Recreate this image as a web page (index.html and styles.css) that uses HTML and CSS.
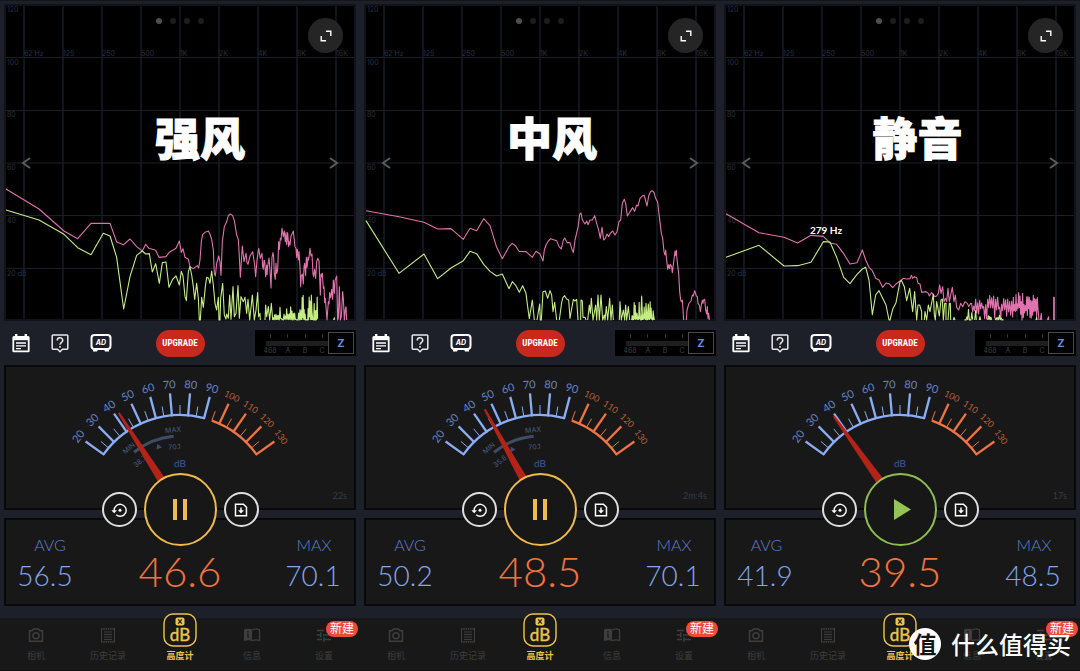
FILE: index.html
```html
<!DOCTYPE html>
<html lang="zh-CN">
<head>
<meta charset="utf-8">
<meta name="viewport" content="width=device-width, initial-scale=1">
<title>噪音测试</title>
<link rel="stylesheet" href="styles.css">
</head>
<body>
<main class="screens" id="screens"></main>
<div class="watermark">
  <span class="watermark-logo">值</span>
  <span class="watermark-text">什么值得买</span>
</div>
<script src="script.js"></script>
</body>
</html>
```
FILE: styles.css
```css
* { box-sizing: border-box; }

body {
  margin: 0;
  position: relative;
  background: #1e2029;
  color: #fff;
  font-family: Lato, "Noto Sans CJK SC", sans-serif;
}

button { padding: 0; font: inherit; color: inherit; cursor: pointer; }
svg { display: block; }

.screens {
  display: grid;
  grid-template-columns: repeat(3, 1fr);
  border-top: 1px solid #14161c;
}
.screen { display: flex; flex-direction: column; padding-top: 3px; }

/* Spectrum */
.spectrum { position: relative; margin: 0 4px; background: #000; }
.spectrum-plot { width: 100%; height: auto; }
.plot-frame { fill: #000; stroke: #11131a; stroke-width: 2; }
.grid-x { stroke: #10141b; stroke-width: 2; }
.grid-y { stroke: #191e29; stroke-width: 1; }
.plot-label { fill: #2a3144; font: 7px Inter, sans-serif; }
.peak-label { fill: #fff; font: bold 10px Lato, sans-serif; text-anchor: middle; }
.trace { fill: none; stroke-width: 3.3; stroke-linejoin: round; }
.trace-max { stroke: #e072ad; }
.trace-now { stroke: #c4ec80; }
.arrow { fill: none; stroke: #5c5c5c; stroke-width: 2; }
.page-dot { fill: #1d1d1d; }
.page-dot-on { fill: #4d4d4d; }
.caption {
  position: absolute;
  top: 34%;
  left: var(--center);
  transform: translateX(-50%);
  margin: 0;
  font: 900 45px/50px "Noto Sans CJK SC", sans-serif;
  -webkit-text-stroke: 1px #fff;
  white-space: nowrap;
}
.expand {
  position: absolute;
  top: 14px;
  right: 13px;
  width: 35px;
  height: 35px;
  border: 0;
  border-radius: 50%;
  background: #252525;
  display: grid;
  place-items: center;
}

/* Toolbar */
.toolbar {
  display: grid;
  grid-template-columns: 1fr auto 1fr;
  align-items: center;
  height: 44px;
  margin: 0 4px;
}
.tools { display: flex; gap: 21px; padding-left: 8px; }
.tool { border: 0; background: none; display: grid; place-items: center; }
.upgrade {
  width: 49px;
  height: 27px;
  border: 0;
  border-radius: 14px;
  background: #c7291c;
  font: bold 9px "Liberation Sans Narrow", "Roboto Condensed", "Liberation Sans", sans-serif;
}
.weighting {
  position: relative;
  justify-self: end;
  width: 101px;
  height: 26px;
  padding: 2px 2px 2px 11px;
  background: #000;
}
.weighting-scale { position: absolute; top: 0; left: 0; width: 74px; height: 26px; }
.weighting-scale line { stroke: #333; stroke-width: 1; }
.weighting-scale text { fill: #414141; font: 7px Inter, sans-serif; text-anchor: middle; }
.weighting-range {
  appearance: none;
  position: relative;
  display: block;
  width: 100%;
  height: 22px;
  margin: 0;
  background: none;
}
.weighting-range::-webkit-slider-runnable-track {
  height: 22px;
  background: linear-gradient(#1e1e1e, #1e1e1e) 0 50% / 100% 5px no-repeat;
}
.weighting-range::-webkit-slider-thumb {
  appearance: none;
  width: 26px;
  height: 22px;
  border: 1px solid #4a4a4a;
  background: #030303;
}
.weighting-value {
  position: absolute;
  top: 2px;
  right: 2px;
  width: 26px;
  font: bold 11px/22px Inter, sans-serif;
  text-align: center;
  color: #658de3;
  pointer-events: none;
}

/* Meter */
.meter { position: relative; margin: 0 4px; display: grid; gap: 8px; }
.card { background: #181818; border: 2px solid #08090b; }
.gauge { position: relative; }
.gauge-dial { width: 100%; height: auto; }
.arc, .tick { fill: none; stroke-width: 2.3; }
.tick-minor { stroke-width: 1; }
.low { stroke: #8aadf3; }
.high { stroke: #ef7440; }
.scale-low { fill: #6785c4; font: 11px Lato, sans-serif; text-anchor: middle; }
.scale-high { fill: #b85d35; font: 9px Lato, sans-serif; text-anchor: middle; }
.unit { fill: #405b98; font: 10px Lato, sans-serif; text-anchor: middle; }
.range-arc { fill: none; stroke: #3f4d64; stroke-width: 3; }
.range-mark { fill: #3f4d64; }
.range-text { fill: #4b5f83; font: 7px Inter, sans-serif; text-anchor: middle; }
.needle { fill: #b22318; }
.elapsed { position: absolute; right: 7px; bottom: 6px; font-size: 9px; line-height: 12px; color: #333d4f; }

.controls {
  position: absolute;
  top: 108px;
  left: 0;
  right: 0;
  display: flex;
  justify-content: center;
  align-items: center;
  gap: 7px;
}
.round {
  width: 35px;
  height: 35px;
  border: 2px solid #dedede;
  border-radius: 50%;
  background: #171717;
  display: grid;
  place-items: center;
}
.round-main { width: 73px; height: 73px; border-color: #f0bb49; color: #f0bb49; }
.round-main.paused { border-color: #8fbd50; color: #94c455; }

.stats {
  display: grid;
  grid-template-columns: 78px 1fr 78px;
  height: 88px;
  text-align: center;
}
.stat { display: flex; flex-direction: column; padding-top: 15px; }
.stat-label { font-size: 16px; font-weight: 300; line-height: 20px; color: #5b80cc; }
.stat-avg .stat-label { padding-left: var(--shift); }
.stat-max { padding-right: 4px; }
.stat-max .stat-label { padding-left: 2px; }
.stat-value { font-size: 28px; font-weight: 300; line-height: 40px; color: #83a6ee; }
.stat-now { align-self: center; padding-top: 17px; font-size: 42px; font-weight: 300; line-height: 44px; color: #f0733f; }

/* Tab bar */
.tabs {
  display: grid;
  grid-template-columns: repeat(5, 1fr);
  height: 53px;
  margin-top: 12px;
  background: #181818;
  border-bottom: 1px solid #100d0e;
}
.tab {
  position: relative;
  display: flex;
  flex-direction: column;
  align-items: center;
  justify-content: flex-end;
  height: 44px;
  color: #3e3e3e;
  font-size: 9px;
  line-height: 13px;
  text-decoration: none;
}
.tab-icon { flex: none; margin-bottom: 6px; }
.tab-on { color: #edc54b; font-weight: bold; }
.tab-on .tab-icon { margin-bottom: 2px; }
.db-text { fill: #edc54b; font: 17px Lato, sans-serif; text-anchor: middle; }
.badge {
  position: absolute;
  top: 3px;
  right: 2px;
  width: 32px;
  border-radius: 8px;
  background: #ed4b3b;
  color: #fff;
  font-size: 12px;
  line-height: 16px;
  text-align: center;
}

.watermark {
  position: absolute;
  right: 9px;
  bottom: 11px;
  display: flex;
  align-items: center;
  gap: 10px;
  font-family: "Noto Sans CJK SC", sans-serif;
}
.watermark-logo {
  width: 32px;
  height: 32px;
  border-radius: 50%;
  background: #fff;
  color: #151515;
  font-size: 23px;
  font-weight: bold;
  line-height: 31px;
  text-align: center;
}
.watermark-text { font-size: 24px; font-weight: 500; line-height: 32px; }
```
FILE: script.js
```js
// Deterministic pseudo random value in 0..1
const rand = n => { const v = Math.sin(n * 127.1) * 43758.5453; return v - Math.floor(v); };

// Spikes rising from the floor of the plot
function spikes(from, to, top, step = 3) {
  let d = `M${from},450`;
  for (let x = from; x < to; x += step) {
    const h = (450 - top) * Math.pow(rand(x), 1.3);
    d += ` L${x + step / 2},${450 - h} L${x + step},${450 - h * 0.15 * rand(x + 5)}`;
  }
  return d;
}

// Dense noise around a level
function noise(from, to, level, spread, step = 2) {
  let d = '';
  for (let x = from; x < to; x += step) {
    const sign = ((x - from) / step) % 2 ? 1 : -1;
    d += ` L${x},${Math.min(450, level + sign * spread * rand(x * 1.37 + 3))}`;
  }
  return d;
}

const screens = [
  {
    title: '强风', center: '55.7%', avg: '56.5', now: '46.6', max: '70.1', time: '22s', shift: '10px',
    needle: -32.5, tip: 114, running: true, low: '38.7', mark: -19,
    pink: 'M18,57 117,117 192,183 233,206 273,160 330,160 350,216 371,224 390,207 410,230 427,243 437,223 447,235 467,241 477,262 498,260 508,247 528,235 538,213 544,247 549,236 555,262 565,268 570,290 580,296 592,287 596,294 600,270 604,215 608,193 615,187 625,183 630,192 635,208 640,240 643,310 646,318 650,280 656,258 660,275 663,316 667,215 673,170 680,155 685,137 691,132 698,137 703,152 710,195 715,208 718,260 721,322 727,228 732,275 735,262 738,250 741,278 744,283 750,258 758,245 764,285 767,320 771,270 776,235 781,265 786,250 788,290 790,298 792,272 794,272 797,320 800,285 801,314 803,290 807,264 810,300 813,354 816,262 819,248 821,262 823,312 826,328 828,280 830,310 833,300 836,215 838,238 841,205 843,210 846,175 850,200 853,183 856,215 858,188 860,224 863,188 866,230 867,215 870,225 873,198 877,190 880,183 885,230 888,235 890,262 892,238 895,270 897,245 900,290 902,350 904,318 907,312 910,342 912,290 914,280 917,316 919,262 921,292 924,262 926,270 930,235 933,258 936,252 939,312 941,320 944,298 947,325 950,276 953,265 957,272 961,375 963,312 965,320 967,310 970,355 972,350 974,398 976,385 981,450 985,395 987,402 989,368 992,384 995,358 998,388 1000,330 1003,370 1005,332 1010,318 1013,450 1015,445 1018,350 1021,450 1024,440 1028,365 1030,385 1033,450 1036,418 1038,410 1040,450',
    green: 'M18,120 117,150 192,193 233,233 273,254 310,190 330,198 350,262 371,417 390,320 410,256 427,243 437,252 448,251 457,306 467,281 478,340 487,278 498,276 507,352 518,328 528,318 538,345 544,304 549,318 555,380 559,392 565,305 570,290 575,315 580,350 584,388 590,340 595,385 598,450 601,450 605,382 610,412 616,350 620,322 626,325 630,340 635,303 640,345 645,400 650,420 655,382 657,450 660,450 662,385 668,340 673,435 678,447 680,432 685,445 689,375 693,448 699,350 703,440 708,430 714,347 718,445 723,380 730,395 735,382 740,430 744,388 749,450 757,375 763,450 768,420 773,368 776,440 780,430 781,450 M795,450 797,405 800,440 805,410 809,450 814,400 818,450'
      + spikes(818, 905, 405, 4) + spikes(905, 952, 375, 3) + 'M934,450 934,375 937,450 M1001,450 1003,443 1003,450'
  },
  {
    title: '中风', center: '53.4%', avg: '50.2', now: '48.5', max: '70.1', time: '2m:4s', shift: '10px',
    needle: -29, tip: 114, running: true, low: '35.8', mark: -25,
    pink: 'M18,122 117,140 192,157 233,177 273,176 310,208 330,175 350,182 371,146 390,167 410,232 427,266 447,230 457,220 467,228 477,244 498,245 517,262 528,244 540,252 549,273 553,240 558,225 565,213 572,206 590,212 597,230 604,237 610,210 614,204 622,218 630,218 635,235 640,248 645,210 654,172 659,133 663,129 667,150 675,162 680,153 684,164 690,150 697,150 704,137 710,160 716,180 721,205 726,172 731,210 736,205 741,192 746,200 751,190 758,183 765,195 771,185 777,155 782,150 787,100 793,88 797,100 802,138 810,125 818,113 824,124 830,105 834,108 840,85 848,77 853,77 861,108 866,78 871,66 877,62 882,68 887,85 893,97 898,140 904,190 908,205 912,245 915,255 917,240 920,270 923,298 926,284 929,296 931,283 935,290 937,308 943,260 945,243 947,256 949,241 951,268 956,310 959,365 962,390 964,395 967,390 971,450 M979,450 981,420 987,400 993,393 997,375 1000,378 1004,362 1009,378 1012,380 1014,400 1018,405 1021,425 1024,405 1027,390 1029,400 1031,390 1034,388 1037,420 1040,432 1042,410 1044,445 1046,430 1048,450',
    green: 'M18,152 117,310 192,252 233,326 273,294 310,272 330,244 350,251 371,283 390,304 410,318 427,312 447,356 457,335 467,346 478,367 488,347 498,370 503,410 508,446 517,390 523,450 M531,450 539,402 541,450 544,450 549,365 556,363 563,385 570,362 575,375 579,425 584,397 590,450 M598,450 605,398 609,382 614,377 620,387 626,390 630,445 640,388 645,393 650,388 654,450 M662,450 663,390 667,393 669,442 675,442 678,450 M683,450 688,405 691,430 694,385 699,450 707,405 710,450 714,375 718,450 723,375 728,450 733,435 735,450 739,410 743,450 749,385 753,450 757,405 760,450 M778,450 780,395 784,450 790,420 794,450 797,405 800,450 805,410 809,450'
      + spikes(815, 880, 385, 3) + 'M842,450 845,378 848,450 M856,450 858,400 861,450 865,402 868,450 M880,430 883,450'
  },
  {
    title: '静音', center: '55%', avg: '41.9', now: '39.5', max: '48.5', time: '17s', shift: '3px',
    needle: -35.5, tip: 114, running: false, peak: '279 Hz',
    pink: 'M18,131 117,188 192,202 233,219 273,196 310,199 330,219 350,223 371,251 390,282 411,278 427,240 437,270 447,292 457,302 467,325 477,330 488,352 498,339 507,341 518,353 528,342 540,333 550,325 560,327 570,326 574,316 578,325 583,320 590,323 594,340 600,342 605,367 618,365 625,370 628,378 635,368 645,380 650,378 655,370 659,345 663,370 668,350 672,395 677,385 680,395 684,355 688,395 692,375 697,352 702,395 706,375 710,412 716,420 722,400 728,410 735,395 742,400 746,410 752,400'
      + noise(755, 880, 412, 36, 3) + noise(880, 955, 408, 42) + ' L957,450 M961,450 964,430 965,450 M982,450 986,440 986,450 M1001,450 1001,382 1003,382 1003,450',
    green: 'M18,262 117,226 192,288 233,287 273,277 310,215 330,216 350,262 371,322 390,341 411,313 427,297 437,292 447,330 457,434 467,375 477,362 498,405 507,450 510,450 518,418 528,398 540,335 544,331 553,350 560,392 569,355 578,425 584,365 590,450 594,405 599,405 605,425 605,450 M613,450 615,425 620,450 625,405 630,425 640,372 643,435 646,450 650,395 658,438 663,390 667,387 670,450 674,400 678,400 678,450 M684,450 688,400 691,400 692,450 M700,450 702,442 705,450'
      + spikes(733, 758, 412, 5) + 'M764,450 767,422 769,450 M778,450 780,440 782,450' + spikes(803, 812, 435, 4) + spikes(826, 848, 432, 5) + 'M948,450 950,442 951,450'
  }
];

const CX = 180, CY = 509;
const polar = (deg, r) => {
  const a = deg * Math.PI / 180;
  return [(CX + r * Math.sin(a)).toFixed(2), (CY - r * Math.cos(a)).toFixed(2)];
};
const angle = v => (v - 75) * 0.99;
const arc = (a, b, r) => `M${polar(a, r)} A${r},${r} 0 0 1 ${polar(b, r)}`;
const ray = (a, r1, r2) => `M${polar(a, r1)} L${polar(a, r2)}`;
const turned = (a, r, cls, text) => {
  const [x, y] = polar(a, r);
  return `<text class="${cls}" x="${x}" y="${y}" transform="rotate(${a} ${x} ${y})">${text}</text>`;
};

function plot(s) {
  const freq = ['62 Hz', '125', '250', '500', '1K', '2K', '4K', '8K', '16K'];
  const cols = freq.map((f, i) => `<path class="grid-x" d="M${24 + i * 39},6V320"/><text class="plot-label" x="${24 + i * 39}" y="56">${f}</text>`).join('');
  const rows = [57.5, 110.5, 163, 215.5, 268.5].map(y => `<path class="grid-y" d="M6,${y}H354"/>`).join('');
  const levels = [['120', 12], ['100', 65], ['80', 117], ['60', 170], ['40', 223], ['20 dB', 276]]
    .map(([t, y]) => `<text class="plot-label" x="7" y="${y}">${t}</text>`).join('');
  const dots = [0, 1, 2, 3].map(i => `<circle class="${i ? 'page-dot' : 'page-dot-on'}" cx="${159 + i * 14}" cy="21" r="3"/>`).join('');
  return `<svg class="spectrum-plot" viewBox="4 4 352 317">
    <rect class="plot-frame" x="5" y="5" width="350" height="315"/>
    ${cols}${rows}${levels}${dots}
    <g transform="translate(0 170) scale(.33333)">
      <path class="trace trace-max" d="${s.pink}"/><path class="trace trace-now" d="${s.green}"/>
    </g>
    <path class="arrow" d="M30,158 L23,163 L30,168 M330,158 L337,163 L330,168"/>
    ${s.peak ? `<text class="peak-label" x="106" y="234">${s.peak}</text>` : ''}
  </svg>`;
}

function dial(s) {
  let out = `<path class="arc low" d="${arc(angle(20), angle(90), 94)}"/><path class="arc high" d="${arc(angle(95), angle(130), 94)}"/>`;
  for (let v = 20; v <= 130; v += 5) {
    const a = angle(v), tone = v <= 90 ? 'low' : 'high';
    out += v % 10
      ? `<path class="tick tick-minor ${tone}" d="${ray(a, 94, 104)}"/>`
      : `<path class="tick ${tone}" d="${ray(a, 93, 116)}"/>` + turned(a, 121, `scale-${tone}`, v);
  }
  if (s.low) {
    const [mx, my] = polar(s.mark, 67);
    out += `<path class="range-arc" d="${arc(-39, -5, 73)}"/>`
      + `<path class="range-mark" transform="translate(${mx} ${my}) rotate(${s.mark})" d="M0,-2 L3,3 H-3Z"/>`
      + turned(-40, 77, 'range-text', 'MIN') + turned(-5, 77, 'range-text', 'MAX')
      + turned(-40, 60, 'range-text', s.low) + turned(-5, 60, 'range-text', s.max);
  }
  out += `<text class="unit" x="180" y="467">dB</text>`
    + `<path class="needle" transform="translate(${CX} ${CY}) rotate(${s.needle})" d="M-1,-${s.tip} H1 L4,-33 H-4Z"/>`;
  return `<svg class="gauge-dial" viewBox="6 367 348 141">${out}</svg>`;
}

const icons = {
  expand: '<svg width="12" height="12" viewBox="0 0 12 12" fill="none" stroke="#fff" stroke-width="1.4"><path d="M6,1.2H10.8V6M1.2,6V10.8H6"/></svg>',
  notes: '<svg width="18" height="20" viewBox="0 0 18 20"><path fill="#fff" d="M3,1h2.4v2h7.2V1H15v2h1a1.6,1.6 0 0 1 1.6,1.6V18a1.3,1.3 0 0 1-1.3,1.3H1.7A1.3,1.3 0 0 1 .4,18V4.6A1.6,1.6 0 0 1 2,3h1z"/><path d="M2.2,7.2V17.5H15.8V7.2z" fill="#1e2029"/><path d="M4,10h10M4,12.8h10M4,15.6h5" stroke="#fff" stroke-width="1.3"/></svg>',
  help: '<svg width="18" height="20" viewBox="0 0 18 20" fill="none" stroke="#e8e8e8" stroke-width="1.5"><path d="M2,2H16a.8,.8 0 0 1 .8,.8V15.5a.8,.8 0 0 1-.8,.8H11.5L9,18.7 6.5,16.3H2a.8,.8 0 0 1-.8-.8V2.8A.8,.8 0 0 1 2,2z"/><path d="M6.3,7.5A2.7,2.5 0 1 1 10.5,9.3C9.5,10 9,10.5 9,11.8M9,13v1.8"/></svg>',
  ad: '<svg width="22" height="20" viewBox="0 0 22 20"><rect x="1.5" y="2" width="19" height="14" rx="3" fill="none" stroke="#fff" stroke-width="2"/><path d="M3,16.5v2h4l1-2M14,16.5l1,2h4v-2" fill="#fff"/><text x="11" y="12" fill="#fff" font-family="Inter" font-size="7" font-style="italic" font-weight="bold" text-anchor="middle">AD</text></svg>',
  reset: '<svg width="16" height="16" viewBox="0 0 16 16" fill="none" stroke="#fff" stroke-width="1.4"><path d="M3.2,9A6,6 0 1 1 5.2,12.8"/><path d="M.3,8.3H6L3.2,11.3z" fill="#fff" stroke="none"/><circle cx="9" cy="8.3" r="1.5" fill="#fff" stroke="none"/></svg>',
  save: '<svg width="14" height="14" viewBox="0 0 14 14" fill="none" stroke="#fff" stroke-width="1.5"><path d="M1.5,1.3H9.5L12.5,4.3V12.7H1.5z"/><path d="M7,4.5V8"/><path d="M4,7.2H10L7,10.5z" fill="#fff" stroke="none"/></svg>',
  pause: '<svg width="15" height="21" viewBox="0 0 15 21" fill="currentColor"><path d="M0,0h4v21H0zM10,0h4v21h-4z"/></svg>',
  play: '<svg width="23" height="21" viewBox="0 0 23 21" fill="currentColor"><path d="M5,0 22,10.5 5,21z"/></svg>',
  camera: '<svg class="tab-icon" width="16" height="16" viewBox="0 0 16 16" fill="none" stroke="currentColor" stroke-width="1.5"><path d="M1.5,3.7H4L5.5,2h5L12,3.7h2.5v10.5h-13z"/><circle cx="8" cy="8.8" r="3"/></svg>',
  history: '<svg class="tab-icon" width="16" height="16" viewBox="0 0 16 16" fill="none" stroke="currentColor"><path d="M1.5,1V15.5M14.5,1V15.5M4,5h8M4,7.5h8M4,10h8M4,12.5h8"/><path d="M1,1.8H15M1,14.8H15" stroke-width="1.8" stroke-dasharray="1.5 .8"/></svg>',
  db: '<svg class="tab-icon" width="34" height="34" viewBox="0 0 34 34"><rect x="1" y="1" width="32" height="32" rx="9" fill="#181818" stroke="#edc54b" stroke-width="1.4"/><rect x="12.5" y="4.5" width="9" height="8" rx="2" fill="#edc54b"/><path d="M15.2,6.3l3.6,4.4M18.8,6.3l-3.6,4.4" stroke="#181818" stroke-width="1.2"/><text class="db-text" x="17" y="28" stroke="#edc54b" stroke-width=".4">dB</text></svg>',
  info: '<svg class="tab-icon" width="18" height="16" viewBox="0 0 18 16"><path d="M1,2.5Q5,.8 9,2.5V14Q5,12.3 1,14z" fill="currentColor"/><path d="M9,2.8Q13,1 16.5,2.8V13.5Q13,12 9,13.7" fill="none" stroke="currentColor" stroke-width="1.3"/><path d="M5,4v1.4M5,6.5v4.5" stroke="#181818" stroke-width="1.3"/></svg>',
  tune: '<svg class="tab-icon" width="16" height="16" viewBox="0 0 16 16" fill="none" stroke="currentColor" stroke-width="1.5"><path d="M1,3.5h7M11,3.5h4M11,1v5M1,8h3M7,8h8M4.8,5.5v5M1,12.5h5M9,12.5h6M8,10v5"/></svg>'
};

function screen(s, i) {
  return `<section class="screen">
    <div class="spectrum">${plot(s)}
      <h2 class="caption" style="--center:${s.center}">${s.title}</h2>
      <button class="expand" aria-label="全屏">${icons.expand}</button>
    </div>
    <div class="toolbar">
      <div class="tools">
        <button class="tool" aria-label="记录">${icons.notes}</button>
        <button class="tool" aria-label="帮助">${icons.help}</button>
        <button class="tool" aria-label="广告">${icons.ad}</button>
      </div>
      <button class="upgrade">UPGRADE</button>
      <div class="weighting">
        <svg class="weighting-scale" viewBox="0 0 74 26">
          <line x1="15.5" x2="15.5" y1="4" y2="8"/><line x1="32.5" x2="32.5" y1="4" y2="8"/><line x1="50.5" x2="50.5" y1="4" y2="8"/><line x1="67.5" x2="67.5" y1="4" y2="8"/>
          <text x="15" y="23">468</text><text x="33" y="23">A</text><text x="50" y="23">B</text><text x="67" y="23">C</text>
        </svg>
        <input class="weighting-range" id="weighting-${i}" type="range" min="0" max="4" value="4" aria-label="频率计权">
        <output class="weighting-value" for="weighting-${i}">Z</output>
      </div>
    </div>
    <div class="meter">
      <div class="card gauge">${dial(s)}<span class="elapsed">${s.time}</span></div>
      <div class="card stats">
        <div class="stat stat-avg" style="--shift:${s.shift}"><span class="stat-label">AVG</span><span class="stat-value">${s.avg}</span></div>
        <div class="stat-now">${s.now}</div>
        <div class="stat stat-max"><span class="stat-label">MAX</span><span class="stat-value">${s.max}</span></div>
      </div>
      <div class="controls">
        <button class="round" aria-label="重置">${icons.reset}</button>
        <button class="round round-main ${s.running ? '' : 'paused'}" aria-label="${s.running ? '暂停' : '开始'}">${s.running ? icons.pause : icons.play}</button>
        <button class="round" aria-label="保存">${icons.save}</button>
      </div>
    </div>
    <nav class="tabs">
      <a class="tab" href="#camera">${icons.camera}相机</a>
      <a class="tab" href="#history">${icons.history}历史记录</a>
      <a class="tab tab-on" href="#meter">${icons.db}高度计</a>
      <a class="tab" href="#info">${icons.info}信息</a>
      <a class="tab" href="#settings">${icons.tune}设置<span class="badge">新建</span></a>
    </nav>
  </section>`;
}

document.getElementById('screens').innerHTML = screens.map(screen).join('');
```
